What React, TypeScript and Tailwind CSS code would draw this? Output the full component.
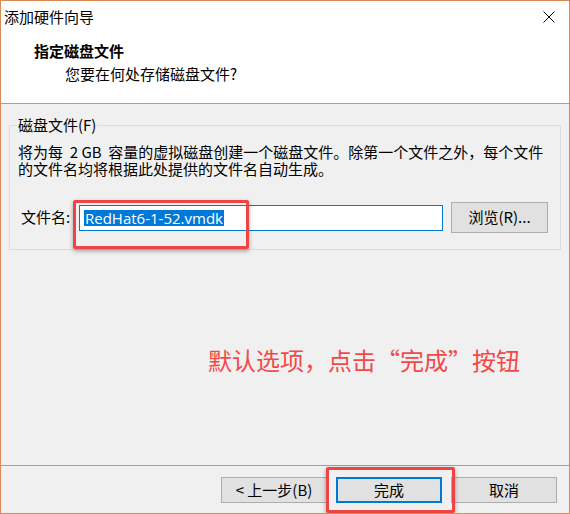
import React from "react";

const font = { fontFamily: '"Noto Sans CJK SC", "Noto Sans", sans-serif' };

function Btn({ children, primary = false }: { children: React.ReactNode; primary?: boolean }) {
  return (
    <div
      className={
        "w-[106px] h-[26px] flex items-center justify-center bg-[#e1e1e1] text-[15px] text-black " +
        (primary ? "border-2 border-[#0078d7]" : "border border-[#adadad]")
      }
    >
      {children}
    </div>
  );
}

export default function App() {
  return (
    <div className="w-[570px] h-[514px] border border-[#d98a52] bg-[#f0f0f0] flex flex-col relative overflow-hidden" style={font}>
      {/* header */}
      <div className="bg-white h-[103px] border-b border-[#a0a0a0] flex flex-col">
        <div className="h-[30px] flex items-center justify-between pl-[3px] pr-[14px]">
          <span className="text-[15px] leading-none text-black">添加硬件向导</span>
          <svg width="12" height="12" viewBox="0 0 12 12" className="mt-[1px]">
            <path d="M0.5 0.5 L11.5 11.5 M11.5 0.5 L0.5 11.5" stroke="#000" strokeWidth="1" />
          </svg>
        </div>
        <div className="pl-[33px] mt-[11px] text-[15px] font-bold leading-[18px] text-black">指定磁盘文件</div>
        <div className="pl-[64px] mt-[5px] text-[15px] leading-[18px] text-black">您要在何处存储磁盘文件?</div>
      </div>

      {/* body */}
      <div className="flex-1 flex flex-col">
        <fieldset className="mx-[8px] mt-[12px] h-[134px] border border-[#dcdcdc] px-[8px]">
          <legend className="px-[1px] ml-[-1px] text-[15px] leading-[18px] text-black">磁盘文件(F)</legend>
          <div className="text-[15px] leading-[17px] text-black mt-[9px] whitespace-nowrap">
            将为每&nbsp;&nbsp;2 GB&nbsp;&nbsp;容量的虚拟磁盘创建一个磁盘文件。除第一个文件之外，每个文件
            <br />
            的文件名均将根据此处提供的文件名自动生成。
          </div>
          <div className="flex items-center mt-[25px]">
            <span className="text-[15px] text-black w-[61px] pl-[3px]">文件名:</span>
            <div className="w-[364px] h-[26px] border border-[#0078d7] bg-white flex items-center pl-[4px]">
              <span className="bg-[#0078d7] text-white text-[15px] leading-[16px] px-[1px]" style={{ fontFamily: '"Open Sans", "Noto Sans", sans-serif' }}>
                RedHat6-1-52.vmdk
              </span>
            </div>
            <div className="ml-[8px] w-[97px] h-[31px] bg-[#e1e1e1] border border-[#adadad] flex items-center justify-center text-[15px] text-black">
              浏览(R)...
            </div>
          </div>
        </fieldset>

        <div className="flex-1 flex items-start pl-[207px] pt-[96px]">
          <span className="text-[24px] leading-[28px] text-[#f44848]">默认选项，点击“完成”按钮</span>
        </div>
      </div>

      {/* footer */}
      <div className="h-[48px] border-t border-[#a0a0a0] flex items-start pt-[11px] pl-[220px] gap-[9px]">
        <Btn>&lt; 上一步(B)</Btn>
        <Btn primary>完成</Btn>
        <Btn>取消</Btn>
      </div>

      {/* red annotation boxes */}
      <div className="absolute left-[72px] top-[199px] w-[176px] h-[49px] border-[3px] border-[#ee4444] rounded-[2px] shadow-[0_2px_4px_rgba(0,0,0,0.35)]" />
      <div className="absolute left-[325px] top-[466px] w-[129px] h-[46px] border-[3px] border-[#ee4444] rounded-[2px] shadow-[0_2px_4px_rgba(0,0,0,0.35)]" />
    </div>
  );
}
